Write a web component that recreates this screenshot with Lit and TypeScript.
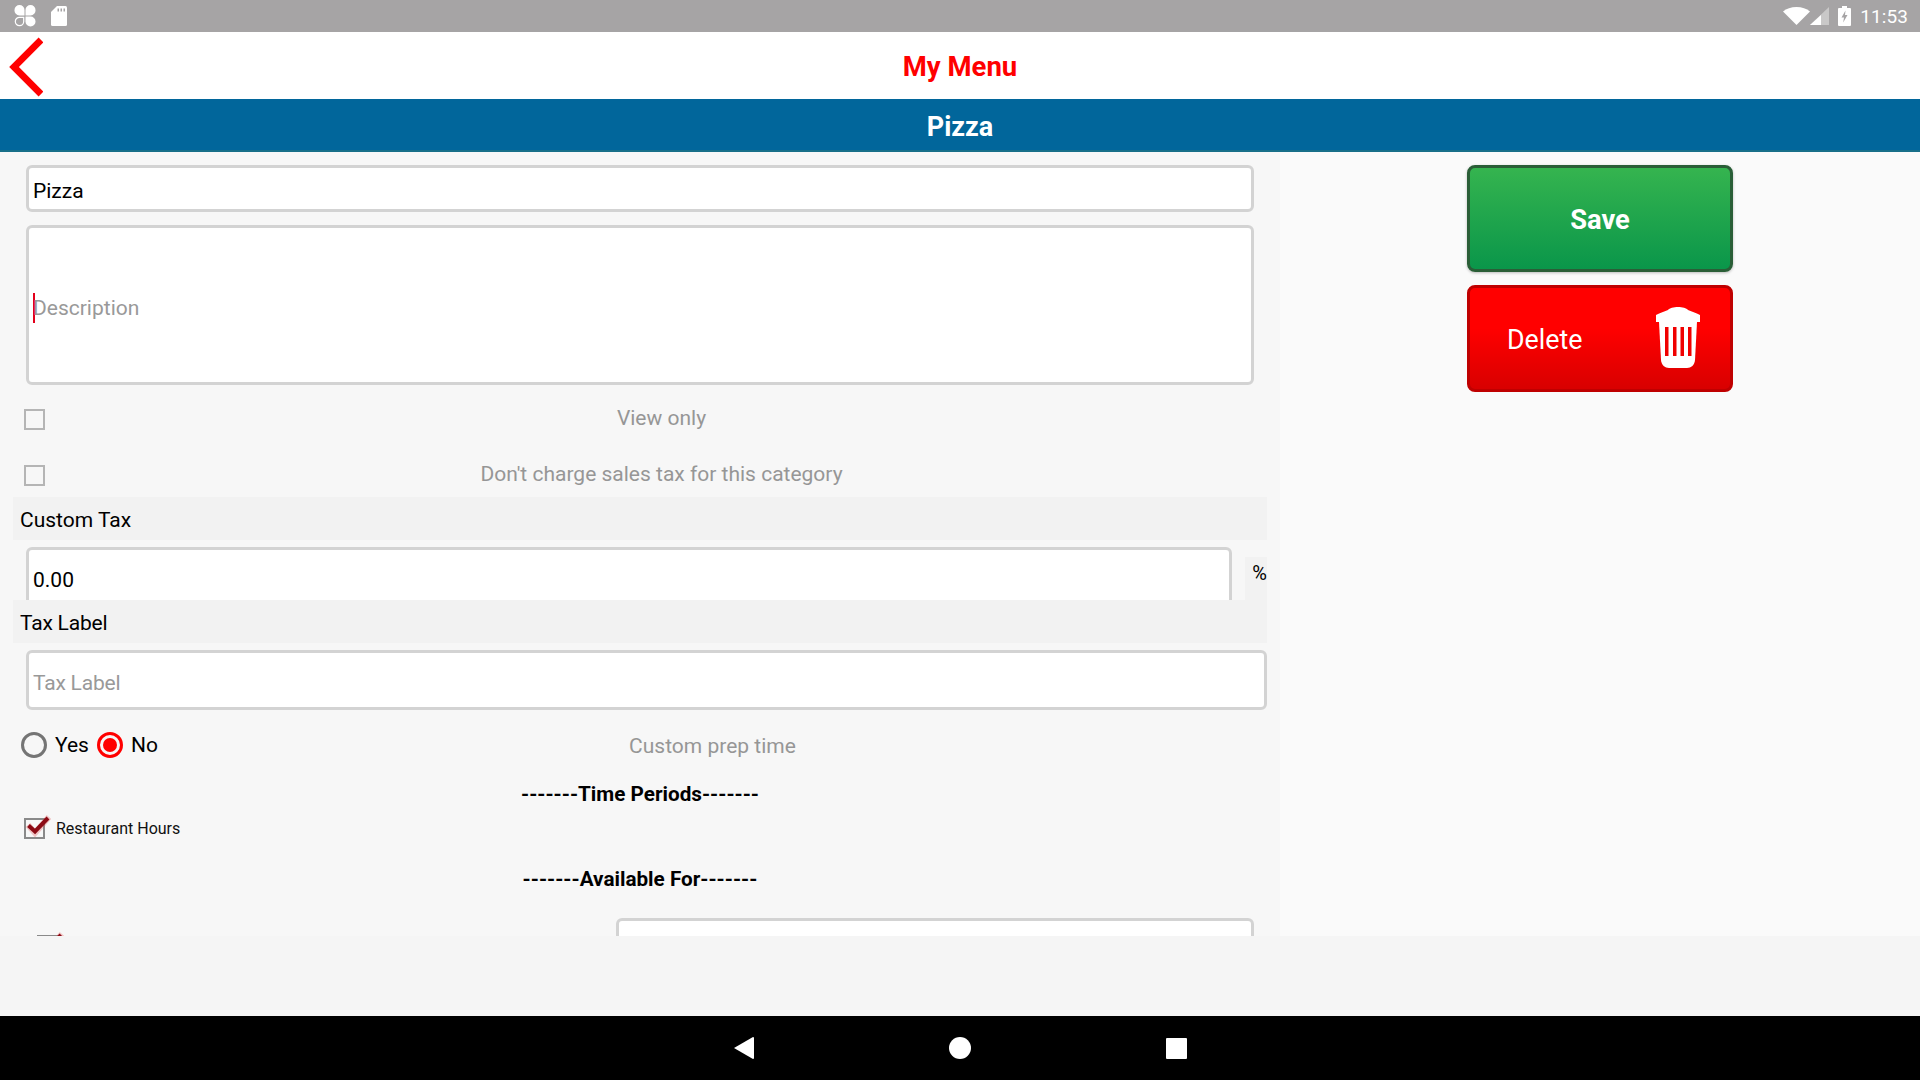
import { css, html, LitElement, svg } from 'lit'
import { customElement } from 'lit/decorators.js'

const clover = svg`<svg width="22" height="22" viewBox="0 0 22 22" fill="#fff">
  <path d="M.5 5a5 5 0 0 1 10 0v5.500H5.500a5 5 0 0 1-5-5.500z" />
  <path d="M11.500 5a5 5 0 0 1 10 0 5 5 0 0 1-5 5.500h-5z" />
  <path d="M11.500 11.500h5a5 5 0 1 1-5 5z" />
  <path d="M9.700 12.300v4.200a4.200 4.200 0 1 1-4.200-4.200z" fill="none" stroke="#fff" stroke-width="1.200" />
</svg>`

const sdCard = svg`<svg width="16" height="20" viewBox="0 0 16 20">
  <path fill="#fff" d="M6 0h8.500A1.500 1.500 0 0 1 16 1.500v17a1.500 1.500 0 0 1-1.500 1.500h-13A1.500 1.500 0 0 1 0 18.500V6z" />
  <path fill="#a6a4a5" d="M6.500 2.500h1.500v3H6.500zM9.500 2.500h1.500v3H9.500zM12.500 2.500h1.500v3h-1.500z" />
</svg>`

const wifi = svg`<svg width="27" height="18" viewBox="0 0 27 18"><path fill="#fff" d="M0 4.500C3.500 1.700 8 0 13.500 0S23.500 1.700 27 4.500L13.500 18z" /></svg>`

const signal = svg`<svg width="19" height="18" viewBox="0 0 19 18">
  <path fill="#c9c8c8" d="M19 0v18H0z" />
  <path fill="#fff" d="M11 8v10H0z" />
</svg>`

const battery = svg`<svg width="13" height="20" viewBox="0 0 13 20">
  <path fill="#fff" d="M4 0h5v2h3a1 1 0 0 1 1 1v16a1 1 0 0 1-1 1H1a1 1 0 0 1-1-1V3a1 1 0 0 1 1-1h3z" />
  <path fill="#a6a4a5" d="M7.500 4.500 3.500 11.500h2.500l-.8 5 4.300-7.500H7z" />
</svg>`

const backArrow = svg`<svg width="34" height="60" viewBox="0 0 34 60" fill="none">
  <path d="M32 3 5 30l27 27" stroke="#ff0000" stroke-width="6.800" />
</svg>`

const trash = svg`<svg width="44" height="62" viewBox="0 0 44 62">
  <path fill="#fff" d="M0 9c3-2 8-3 12-5 3-4 17-4 20 0 4 2 9 3 12 5v7H0z" />
  <path fill="#fff" d="M3 16h38l-2 38c-.3 5-4 8-8 8H13c-4 0-7.700-3-8-8z" />
  <path fill="#f00000" d="M9 21h3.500v29H9zM17 21h3.500v29H17zM24.500 21H28v29h-3.500zM32 21h3.500v29H32z" />
</svg>`

const tick = svg`<svg class="tick" width="26" height="24" viewBox="0 0 26 24" fill="none">
  <path d="M3 11l7 8L24 3" stroke="#e05050" stroke-width="6" opacity=".3" />
  <path d="M3.500 11.500l6.500 6L23 4" stroke="#8c0a14" stroke-width="4" />
</svg>`

const navBack = svg`<svg width="20" height="22" viewBox="0 0 20 22"><path fill="#fff" d="M19 0a1 1 0 0 1 1 1v20a1 1 0 0 1-1 1L0 11z" /></svg>`

@customElement('app-root')
export class AppRoot extends LitElement {
  static styles = css`
    :host {
      display: flex;
      flex-direction: column;
      width: 1920px;
      height: 1080px;
      overflow: hidden;
      background: #f5f5f5;
      font-family: Roboto, 'Liberation Sans', sans-serif;
      font-kerning: normal;
      color: #000;
    }
    svg {
      display: block;
    }
    .status {
      display: flex;
      align-items: center;
      height: 32px;
      padding: 0 12px 0 14px;
      background: #a6a4a5;
    }
    .status .left {
      display: flex;
      align-items: center;
      gap: 15px;
      flex: 1;
    }
    .status .right {
      display: flex;
      align-items: center;
      color: #fff;
      font-size: 19px;
      letter-spacing: 0.1px;
    }
    .status .bat {
      margin: 0 9px;
    }
    .header {
      display: grid;
      grid-template-columns: 1fr auto 1fr;
      align-items: center;
      height: 67px;
      background: #fff;
    }
    .header .back {
      padding: 3px 0 0 9px;
    }
    .header .title {
      padding-top: 2px;
      font-size: 27.500px;
      font-weight: 700;
      color: #ff0000;
    }
    .sub {
      height: 51px;
      line-height: 56px;
      text-align: center;
      background: #01669b;
      border-bottom: 2px solid #186f89;
      color: #fff;
      font-size: 27px;
      font-weight: 700;
    }
    .body {
      display: flex;
      height: 784px;
      background: #fafafa;
    }
    .form {
      width: 1280px;
      height: 784px;
      overflow: hidden;
      background: #f7f7f7;
      padding-top: 13px;
      box-sizing: border-box;
    }
    .field {
      box-sizing: border-box;
      display: flex;
      align-items: center;
      margin-left: 26px;
      padding: 4px 4px 0;
      background: #fff;
      border: 3px solid #d3d3d3;
      border-radius: 6px;
      font-size: 21px;
    }
    .name {
      width: 1228px;
      height: 47px;
    }
    .desc {
      width: 1228px;
      height: 160px;
      margin-top: 13px;
      margin-bottom: 12px;
      padding-top: 6px;
      color: #999;
    }
    .caret {
      width: 2px;
      height: 30px;
      margin-right: -2px;
      background: #e3001b;
    }
    .check-row {
      display: grid;
      grid-template-columns: 24px 21px 1fr;
      align-items: center;
      height: 44px;
      width: 1278px;
      color: #969696;
      font-size: 21px;
      text-align: center;
    }
    .check-row + .check-row {
      margin-top: 12px;
    }
    .box {
      box-sizing: border-box;
      position: relative;
      width: 21px;
      height: 21px;
      border: 2px solid #b5b5b5;
      background: #f7f7f7;
    }
    .check-row .box {
      grid-column: 2;
    }
    .box .tick {
      position: absolute;
      left: -1px;
      top: -6px;
    }
    .check-row .label {
      grid-column: 3;
      margin-top: -2px;
    }
    .band {
      box-sizing: border-box;
      width: 1254px;
      height: 43px;
      margin-left: 13px;
      padding: 0 7px;
      line-height: 47px;
      background: #f2f2f2;
      font-size: 21px;
    }
    .band.tight,
    .tax-label {
      letter-spacing: -0.2px;
    }
    .tax-row {
      display: flex;
      align-items: flex-start;
      height: 60px;
      padding-top: 7px;
      box-sizing: border-box;
      overflow: hidden;
    }
    .tax-row .field {
      width: 1206px;
      height: 60px;
      flex: none;
      padding-top: 6px;
    }
    .percent {
      width: 22px;
      height: 43px;
      margin: 10px 0 0 13px;
      background: #f2f2f2;
      font-size: 20px;
      line-height: 32px;
      text-align: right;
    }
    .tax-label {
      width: 1241px;
      height: 60px;
      margin-top: 7px;
      color: #999;
      padding-top: 6px;
    }
    .radio-row {
      display: flex;
      align-items: center;
      height: 26px;
      margin-top: 22px;
      padding-left: 21px;
      width: 1238px;
      font-size: 21px;
    }
    .radio {
      box-sizing: border-box;
      display: grid;
      place-items: center;
      width: 26px;
      height: 26px;
      margin-right: 8px;
      border: 3px solid #757575;
      border-radius: 50%;
    }
    .radio.on {
      border-color: #ff0000;
    }
    .radio.on::after {
      content: '';
      width: 14px;
      height: 14px;
      border-radius: 50%;
      background: #ff0000;
    }
    .radio-text {
      margin-right: 8px;
    }
    .prep {
      flex: 1;
      text-align: center;
      color: #969696;
      padding-top: 2px;
    }
    .section {
      width: 1280px;
      text-align: center;
      font-size: 20.700px;
      font-weight: 700;
      line-height: 24px;
    }
    .time {
      margin-top: 24px;
    }
    .avail {
      margin-top: 28px;
    }
    .hours {
      display: flex;
      align-items: center;
      gap: 11px;
      height: 21px;
      margin-top: 12px;
      padding-left: 24px;
      font-size: 16px;
      color: #111;
    }
    .hours .box {
      flex: none;
      border-color: #8a8a8a;
    }
    .last {
      display: flex;
      align-items: flex-start;
      margin-top: 27px;
    }
    .last .box {
      flex: none;
      margin: 17px 0 0 37px;
      border-color: #8a8a8a;
    }
    .last .field {
      width: 638px;
      height: 60px;
      margin-left: 558px;
      flex: none;
    }
    .side {
      display: flex;
      flex-direction: column;
      gap: 13px;
      padding: 13px 0 0 187px;
    }
    .btn {
      box-sizing: border-box;
      display: flex;
      align-items: center;
      width: 266px;
      height: 107px;
      padding-top: 2px;
      border-radius: 8px;
      color: #fff;
      font-size: 26px;
    }
    .save {
      justify-content: center;
      font-size: 27.300px;
      font-weight: 700;
      border: 3px solid #2a5e37;
      background: linear-gradient(#35b44f, #0a964a);
      box-shadow: 0 1px 3px rgb(0 0 0 / 0.25);
    }
    .delete {
      justify-content: space-between;
      padding: 0 30px 0 37px;
      border: 3px solid #bf0000;
      background: linear-gradient(#ff0000 40%, #d80000);
    }
    .delete span {
      margin-top: 2px;
      font-size: 26.800px;
    }
    .delete svg {
      margin-top: -4px;
    }
    .footer {
      height: 80px;
      background: #f5f5f5;
    }
    .nav {
      display: flex;
      align-items: center;
      height: 64px;
      padding-left: 734px;
      box-sizing: border-box;
      background: #000;
    }
    .nav .dot {
      width: 22px;
      height: 22px;
      margin-left: 195px;
      border-radius: 50%;
      background: #fff;
    }
    .nav .square {
      width: 21px;
      height: 21px;
      margin-left: 195px;
      border-radius: 1px;
      background: #fff;
    }
  `

  render() {
    return html`
      <div class="status">
        <div class="left">${clover}${sdCard}</div>
        <div class="right">
          ${wifi}${signal}<span class="bat">${battery}</span><span>11:53</span>
        </div>
      </div>
      <div class="header">
        <div class="back">${backArrow}</div>
        <div class="title">My Menu</div>
      </div>
      <div class="sub">Pizza</div>
      <div class="body">
        <div class="form">
          <div class="field name">Pizza</div>
          <div class="field desc"><span class="caret"></span>Description</div>
          <div class="check-row">
            <span class="box"></span>
            <span class="label">View only</span>
          </div>
          <div class="check-row">
            <span class="box"></span>
            <span class="label">Don't charge sales tax for this category</span>
          </div>
          <div class="band">Custom Tax</div>
          <div class="tax-row">
            <div class="field">0.00</div>
            <div class="percent">%</div>
          </div>
          <div class="band tight">Tax Label</div>
          <div class="field tax-label">Tax Label</div>
          <div class="radio-row">
            <span class="radio"></span><span class="radio-text">Yes</span>
            <span class="radio on"></span><span class="radio-text">No</span>
            <span class="prep">Custom prep time</span>
          </div>
          <div class="section time">-------Time Periods-------</div>
          <div class="hours">
            <span class="box">${tick}</span>
            <span>Restaurant Hours</span>
          </div>
          <div class="section avail">-------Available For-------</div>
          <div class="last">
            <span class="box">${tick}</span>
            <div class="field"></div>
          </div>
        </div>
        <div class="side">
          <div class="btn save">Save</div>
          <div class="btn delete"><span>Delete</span>${trash}</div>
        </div>
      </div>
      <div class="footer"></div>
      <div class="nav">
        ${navBack}
        <span class="dot"></span>
        <span class="square"></span>
      </div>
    `
  }
}

declare global {
  interface HTMLElementTagNameMap {
    'app-root': AppRoot
  }
}
